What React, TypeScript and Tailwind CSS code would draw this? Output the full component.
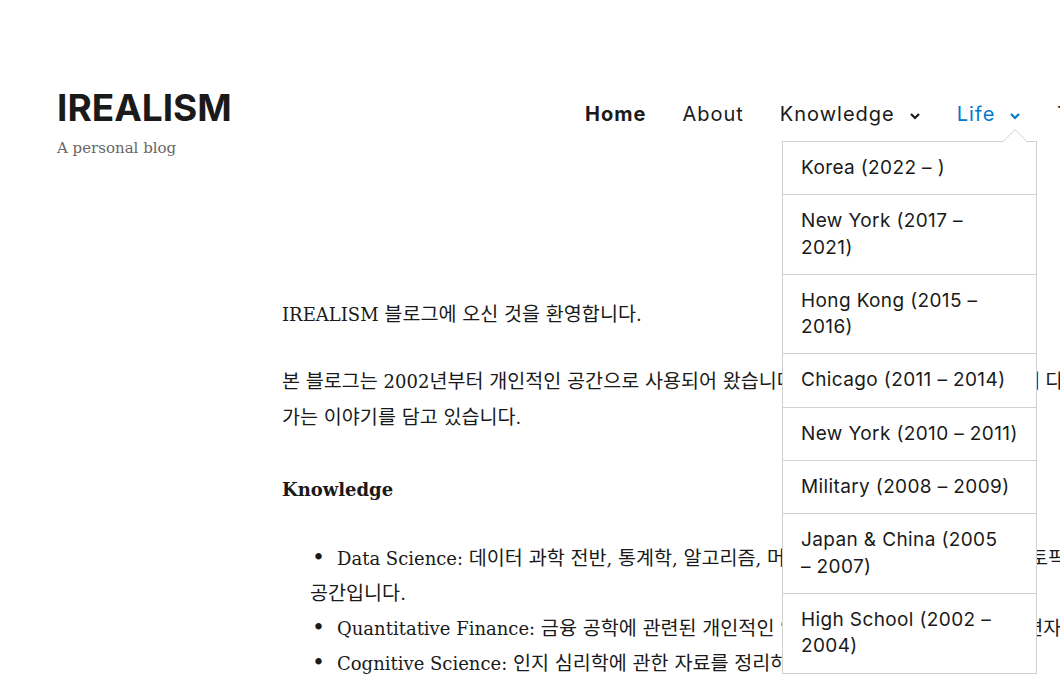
import { Fragment } from 'react';

const sans = "font-['Inter','Noto_Sans_CJK_KR',sans-serif]";
const serif = "font-['DejaVu_Serif','Noto_Sans_CJK_KR',serif]";

const lifeMenu: string[][] = [
  ['Korea (2022 – )'],
  ['New York (2017 –', '2021)'],
  ['Hong Kong (2015 –', '2016)'],
  ['Chicago (2011 – 2014)'],
  ['New York (2010 – 2011)'],
  ['Military (2008 – 2009)'],
  ['Japan & China (2005', '– 2007)'],
  ['High School (2002 –', '2004)'],
];

// hangul in the reference is set a little bigger than the latin serif
function Mixed({ text }: { text: string }) {
  const parts = text.split(/([\uAC00-\uD7A3]+)/);
  return (
    <>
      {parts.map((p, i) =>
        /[\uAC00-\uD7A3]/.test(p) ? (
          <span key={i} className="text-[19.6px]">
            {p}
          </span>
        ) : (
          <Fragment key={i}>{p}</Fragment>
        )
      )}
    </>
  );
}

function Chevron({ color }: { color: string }) {
  return (
    <svg width="12" height="8" viewBox="0 0 12 8" className="ml-[14px] mt-[3px]">
      <path d="M2 2 L6 6 L10 2" fill="none" stroke={color} strokeWidth="2.2" />
    </svg>
  );
}

function Bullet() {
  return <span className="inline-block w-[27px] pl-[2px] text-[22px] leading-[0]">•</span>;
}

function LifeDropdown() {
  return (
    <div className="absolute left-[782px] top-[141px] w-[255px] border border-[#d1d1d1] bg-white">
      <svg
        width="26"
        height="14"
        viewBox="0 0 26 14"
        className="absolute left-[219px] top-[-13px]"
      >
        <path d="M0 13.5 L13 0.7 L26 13.5" fill="white" stroke="#d1d1d1" strokeWidth="1" />
        <rect x="1" y="13" width="24" height="2" fill="white" />
      </svg>
      <ul>
        {lifeMenu.map((lines, i) => (
          <li
            key={i}
            className={`px-[18px] py-[13px] text-[19px] leading-[26.3px] text-[#1a1a1a] tracking-[0.02em] whitespace-nowrap ${
              i > 0 ? 'border-t border-[#d1d1d1]' : ''
            }`}
          >
            {lines.map((l, j) => (
              <Fragment key={j}>
                {j > 0 && <br />}
                {l}
              </Fragment>
            ))}
          </li>
        ))}
      </ul>
    </div>
  );
}

export default function App() {
  return (
    <div className={`relative w-[1060px] h-[689px] overflow-hidden bg-white ${sans}`}>
      <header className="flex items-start pl-[57px] pt-[86px]">
        <div className="w-[528px] shrink-0">
          <h1 className="text-[37px] leading-[44px] font-bold text-[#1a1a1a]">IREALISM</h1>
          <p className={`${serif} mt-[8px] text-[15px] leading-[20px] text-[#686868]`}>
            A personal blog
          </p>
        </div>
        <nav className="flex items-center gap-[36px] pt-[15px] text-[20px] leading-[26px] text-[#1a1a1a] tracking-[0.05em] whitespace-nowrap">
          <a className="font-bold">Home</a>
          <a>About</a>
          <a className="flex items-center">
            Knowledge
            <Chevron color="#1a1a1a" />
          </a>
          <a className="flex items-center text-[#007acc]">
            Life
            <Chevron color="#007acc" />
          </a>
          <a>Travel</a>
        </nav>
      </header>

      <main
        className={`${serif} pl-[282px] pt-[139px] text-[18px] leading-[36px] text-[#1a1a1a] whitespace-nowrap`}
      >
        <p>
          <Mixed text="IREALISM 블로그에 오신 것을 환영합니다." />
        </p>
        <p className="mt-[31px]">
          <Mixed text="본 블로그는 2002년부터 개인적인 공간으로 사용되어 왔습니다. 지식과 삶이라는 두 주제들에 다" />
          <br />
          <Mixed text="가는 이야기를 담고 있습니다." />
        </p>
        <h2 className="mt-[36px] font-bold">Knowledge</h2>
        <ul className="mt-[33px] pl-[28px] leading-[35px]">
          <li>
            <Bullet />
            <Mixed text={'Data Science: 데이터 과학 전반, 통계학, 알고리즘, 머신러닝 등에 관련된 자료들과\u00a0 토픽'} />
            <br />
            <Mixed text="공간입니다." />
          </li>
          <li>
            <Bullet />
            <Mixed text="Quantitative Finance: 금융 공학에 관련된 개인적인 연구 노트와 자료를 잘 정리한 편자" />
          </li>
          <li>
            <Bullet />
            <Mixed text="Cognitive Science: 인지 심리학에 관한 자료를 정리하는 공간입니다." />
          </li>
        </ul>
      </main>

      <LifeDropdown />
    </div>
  );
}
